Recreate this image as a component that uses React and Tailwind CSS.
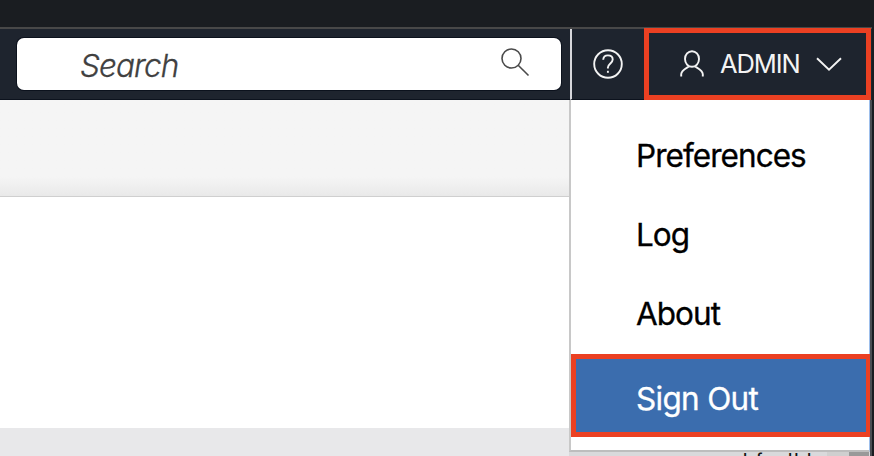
const menuItems = ["Preferences", "Log", "About"];

function SearchBox() {
  return (
    <div className="ml-[17px] mt-[9px] flex h-[52px] w-[544px] items-center justify-between rounded-[7px] bg-white pl-[63px] pr-[31px] shadow-[0_0_0_1px_#0c121d]">
      <span className="whitespace-nowrap pt-[3px] text-[31.5px] font-light italic leading-none tracking-[-0.9px] text-[#404040] [-webkit-text-stroke:0.3px]">
        Search
      </span>
      <svg className="-mt-1 shrink-0" width="30" height="30" viewBox="0 0 30 30" fill="none" stroke="#4a4a4a" strokeWidth="1.6">
        <circle cx="11.5" cy="11.5" r="9.5" />
        <path d="M18.2 18.2 28.5 28.5" />
      </svg>
    </div>
  );
}

function Header() {
  return (
    <header className="flex h-[73px] w-[872px] shrink-0 border-t-2 border-[#484848] bg-[#1e242e]">
      <div className="w-[570px] border-b border-[#0c121d]">
        <SearchBox />
      </div>
      <div className="flex w-[74px] items-center border-b border-l-2 border-b-[#0c121d] border-l-[#d7d7dc] pl-[21px]">
        <svg className="-mt-px" width="30" height="30" viewBox="0 0 30 30" fill="none" stroke="#f3f3f3" strokeWidth="1.9">
          <circle cx="15" cy="15" r="13.8" />
          <path d="M10.2 10.7C10.4 7.9 12.2 6.4 14.9 6.4c2.9 0 4.8 1.6 4.8 4.1 0 3.7-4.8 4.2-4.8 8.1v.8" />
          <path d="M14.9 21.8v2" />
        </svg>
      </div>
      <div className="-mt-px flex h-[72px] w-[227px] items-center border-[5px] border-[#eb4022] pl-[31px] text-white">
        <svg className="shrink-0" width="24" height="28" viewBox="0 0 24 28" fill="none" stroke="#f3f3f3" strokeWidth="1.9">
          <ellipse cx="12" cy="9" rx="7" ry="7.8" />
          <path d="M1.2 26.5v-2.2c0-3.7 3.8-5.3 7.7-7.8M22.8 26.5v-2.2c0-3.7-3.8-5.3-7.7-7.8" />
        </svg>
        <span className="ml-[16px] w-[80px] whitespace-nowrap text-[25.5px] leading-none tracking-[-1.1px] text-[#f4f4f4]">
          ADMIN
        </span>
        <svg className="ml-[16px] shrink-0" width="26" height="14" viewBox="0 0 26 14" fill="none" stroke="#f3f3f3" strokeWidth="1.9">
          <path d="M1 1.2 13 12.6 25 1.2" />
        </svg>
      </div>
    </header>
  );
}

function Menu() {
  return (
    <nav className="flex h-[352px] w-[301px] flex-col border-b-2 border-l-2 border-r border-b-[#bdbdbd] border-l-[#c8c8c8] border-r-[#9dbfec] bg-white pt-[16px]">
      {menuItems.map((item) => (
        <a key={item} className="flex h-[79px] shrink-0 items-center pl-[65px] text-[31.5px] leading-none tracking-[-0.95px] text-black [-webkit-text-stroke:0.3px]">
          {item}
        </a>
      ))}
      <a className="-mr-[2px] mt-px flex h-[83px] shrink-0 items-center border-[5px] border-[#eb4022] bg-[#3b6dae] pl-[60px] pt-[6px] text-[31.5px] leading-none tracking-[-0.7px] text-white [-webkit-text-stroke:0.3px]">
        Sign Out
      </a>
    </nav>
  );
}

export default function App() {
  return (
    <div className="flex h-[456px] w-[874px] flex-col overflow-hidden bg-[#1a1d21] font-[Inter,'Liberation_Sans',sans-serif]">
      <div className="h-[27px] shrink-0" />
      <Header />
      <div className="flex h-[356px]">
        <main className="flex w-[569px] flex-col bg-white">
          <div className="h-[97px] border-b border-[#cfcfcf] bg-gradient-to-b from-[#f5f5f5] from-80% to-[#e9e9e9]" />
          <div className="h-[231px]" />
          <div className="flex-1 bg-[#e8e8ea]" />
        </main>
        <div className="w-[301px]">
          <Menu />
          <div className="flex h-[4px] overflow-hidden bg-[#d9d9db] pl-[174px] text-[17px] font-medium leading-[17px] text-[#111]">
            <span className="w-[13px]">l</span>
            <span className="w-[32px]">f</span>
            <span className="w-[39px] whitespace-nowrap tracking-[2px]">ll l</span>
            <div className="w-[22px] bg-[#cfcfcf]" />
            <div className="w-[20px] bg-[#999]" />
          </div>
        </div>
        <div className="w-[2px] bg-[#4b4e53]" />
      </div>
    </div>
  );
}
